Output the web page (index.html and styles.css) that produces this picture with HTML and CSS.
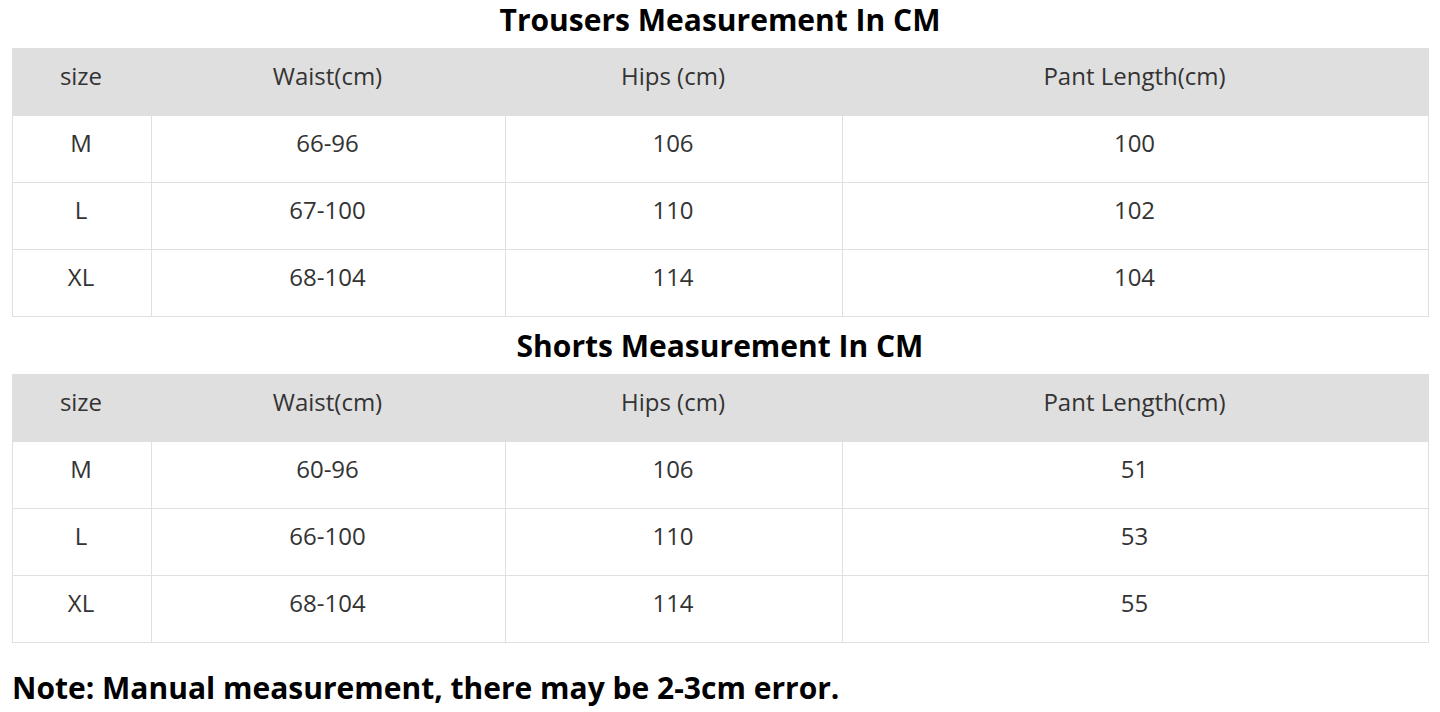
FILE: index.html
```html
<!DOCTYPE html>
<html>
<head>
<meta charset="utf-8">
<link rel="stylesheet" href="styles.css">
</head>
<body>
<div class="page">
  <h2 class="title first">Trousers Measurement In CM</h2>
  <table class="size-table">
    <colgroup><col class="c1"><col class="c2"><col class="c3"><col class="c4"></colgroup>
    <thead>
      <tr><th>size</th><th>Waist(cm)</th><th>Hips (cm)</th><th>Pant Length(cm)</th></tr>
    </thead>
    <tbody>
      <tr><td>M</td><td>66-96</td><td>106</td><td>100</td></tr>
      <tr><td>L</td><td>67-100</td><td>110</td><td>102</td></tr>
      <tr><td>XL</td><td>68-104</td><td>114</td><td>104</td></tr>
    </tbody>
  </table>
  <h2 class="title second">Shorts Measurement In CM</h2>
  <table class="size-table">
    <colgroup><col class="c1"><col class="c2"><col class="c3"><col class="c4"></colgroup>
    <thead>
      <tr><th>size</th><th>Waist(cm)</th><th>Hips (cm)</th><th>Pant Length(cm)</th></tr>
    </thead>
    <tbody>
      <tr><td>M</td><td>60-96</td><td>106</td><td>51</td></tr>
      <tr><td>L</td><td>66-100</td><td>110</td><td>53</td></tr>
      <tr><td>XL</td><td>68-104</td><td>114</td><td>55</td></tr>
    </tbody>
  </table>
  <p class="note">Note: Manual measurement, there may be 2-3cm error.</p>
</div>
</body>
</html>
```
FILE: styles.css
```css
html, body {
  margin: 0;
  padding: 0;
  background: #fff;
}
body {
  font-family: "Open Sans", "Liberation Sans", sans-serif;
  color: #333;
}
.page {
  padding: 0 12px;
}
.title {
  margin: 0;
  font-size: 30px;
  line-height: 40px;
  font-weight: 700;
  color: #000;
  text-align: center;
}
.title.first {
  margin-bottom: 8px;
}
.title.second {
  margin-top: 9px;
  margin-bottom: 8px;
}
.size-table {
  width: 1416px;
  border-collapse: collapse;
  table-layout: fixed;
}
.c1 { width: 139px; }
.c2 { width: 354px; }
.c3 { width: 337px; }
.c4 { width: 586px; }
.size-table th,
.size-table td {
  font-size: 24px;
  line-height: 32px;
  font-weight: 400;
  color: #333;
  text-align: center;
  padding: 0 2px 12px 0;
  height: 54px;
}
.size-table th {
  background: #dfdfdf;
  border: 1px solid #dfdfdf;
}
.size-table td {
  border: 1px solid #e0e0e0;
}
.note {
  margin: 25px 0 0;
  font-size: 30px;
  line-height: 40px;
  font-weight: 700;
  color: #000;
}
```
